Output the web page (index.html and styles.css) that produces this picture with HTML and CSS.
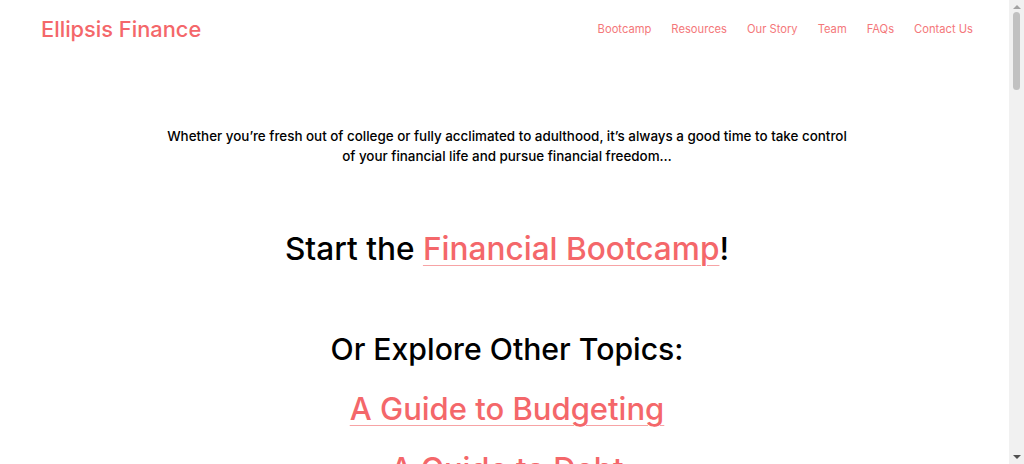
FILE: index.html
```html
<!DOCTYPE html>
<html lang="en">
<head>
<meta charset="utf-8">
<title>Ellipsis Finance</title>
<link rel="stylesheet" href="styles.css">
</head>
<body>
<div class="page">
  <header class="site-header">
    <a class="logo" href="#">Ellipsis Finance</a>
    <nav class="nav">
      <a href="#">Bootcamp</a>
      <a href="#">Resources</a>
      <a href="#">Our Story</a>
      <a href="#">Team</a>
      <a href="#">FAQs</a>
      <a href="#">Contact Us</a>
    </nav>
  </header>
  <main class="main">
    <p class="intro">Whether you’re fresh out of college or fully acclimated to adulthood, it’s always a good time to take control<br>of your financial life and pursue financial freedom…</p>
    <h2 class="start">Start the <a href="#">Financial Bootcamp</a>!</h2>
    <h2 class="explore">Or Explore Other Topics:</h2>
    <h2 class="topic"><a href="#">A Guide to Budgeting</a></h2>
    <h2 class="topic"><a href="#">A Guide to Debt</a></h2>
  </main>
</div>
<div class="scrollbar" aria-hidden="true">
  <span class="arrow up"></span>
  <span class="thumb"></span>
  <span class="arrow down"></span>
</div>
</body>
</html>
```
FILE: styles.css
```css
html, body {
  margin: 0;
  padding: 0;
  background: #ffffff;
}
body {
  font-family: "Inter", "Open Sans", sans-serif;
  color: #000;
}
.page {
  width: 1009px;
}
a {
  text-decoration: none;
  color: #f4676a;
}
.site-header {
  display: flex;
  justify-content: space-between;
  align-items: center;
  height: 58px;
  padding: 0 36px 0 41px;
}
.logo {
  font-size: 21.8px;
  font-weight: 500;
  color: #f4676a;
}
.nav {
  display: flex;
  gap: 20px;
}
.nav a {
  font-size: 11.2px;
  color: #f4777a;
}
.main {
  display: flex;
  flex-direction: column;
  align-items: center;
  text-align: center;
  padding-left: 5px;
}
.intro {
  margin: 68px 0 0;
  font-size: 13.4px;
  line-height: 20px;
  font-weight: 500;
}
.start, .explore, .topic {
  margin: 0;
  font-weight: 500;
  font-size: 31px;
  line-height: 40px;
}
.start {
  margin-top: 63px;
  font-size: 31.6px;
}
.explore {
  margin-top: 60px;
  font-size: 30.2px;
}
.topic { margin-top: 20px; }
.start a, .topic a {
  text-decoration: underline;
  text-decoration-color: #f7a3a5;
  text-decoration-thickness: 1px;
  text-underline-offset: 5px;
}
.scrollbar {
  position: fixed;
  top: 0;
  right: 0;
  width: 15px;
  height: 100%;
  background: #f1f1f1;
  display: flex;
  flex-direction: column;
  align-items: center;
}
.thumb {
  width: 7px;
  height: 78px;
  margin-top: 3px;
  border-radius: 4px;
  background: #c1c1c1;
}
.arrow {
  width: 0;
  height: 0;
  border-left: 4px solid transparent;
  border-right: 4px solid transparent;
}
.arrow.up {
  margin-top: 5px;
  border-bottom: 4px solid #a3a3a3;
}
.arrow.down {
  margin-top: auto;
  margin-bottom: 5px;
  border-top: 4px solid #505050;
}
```
